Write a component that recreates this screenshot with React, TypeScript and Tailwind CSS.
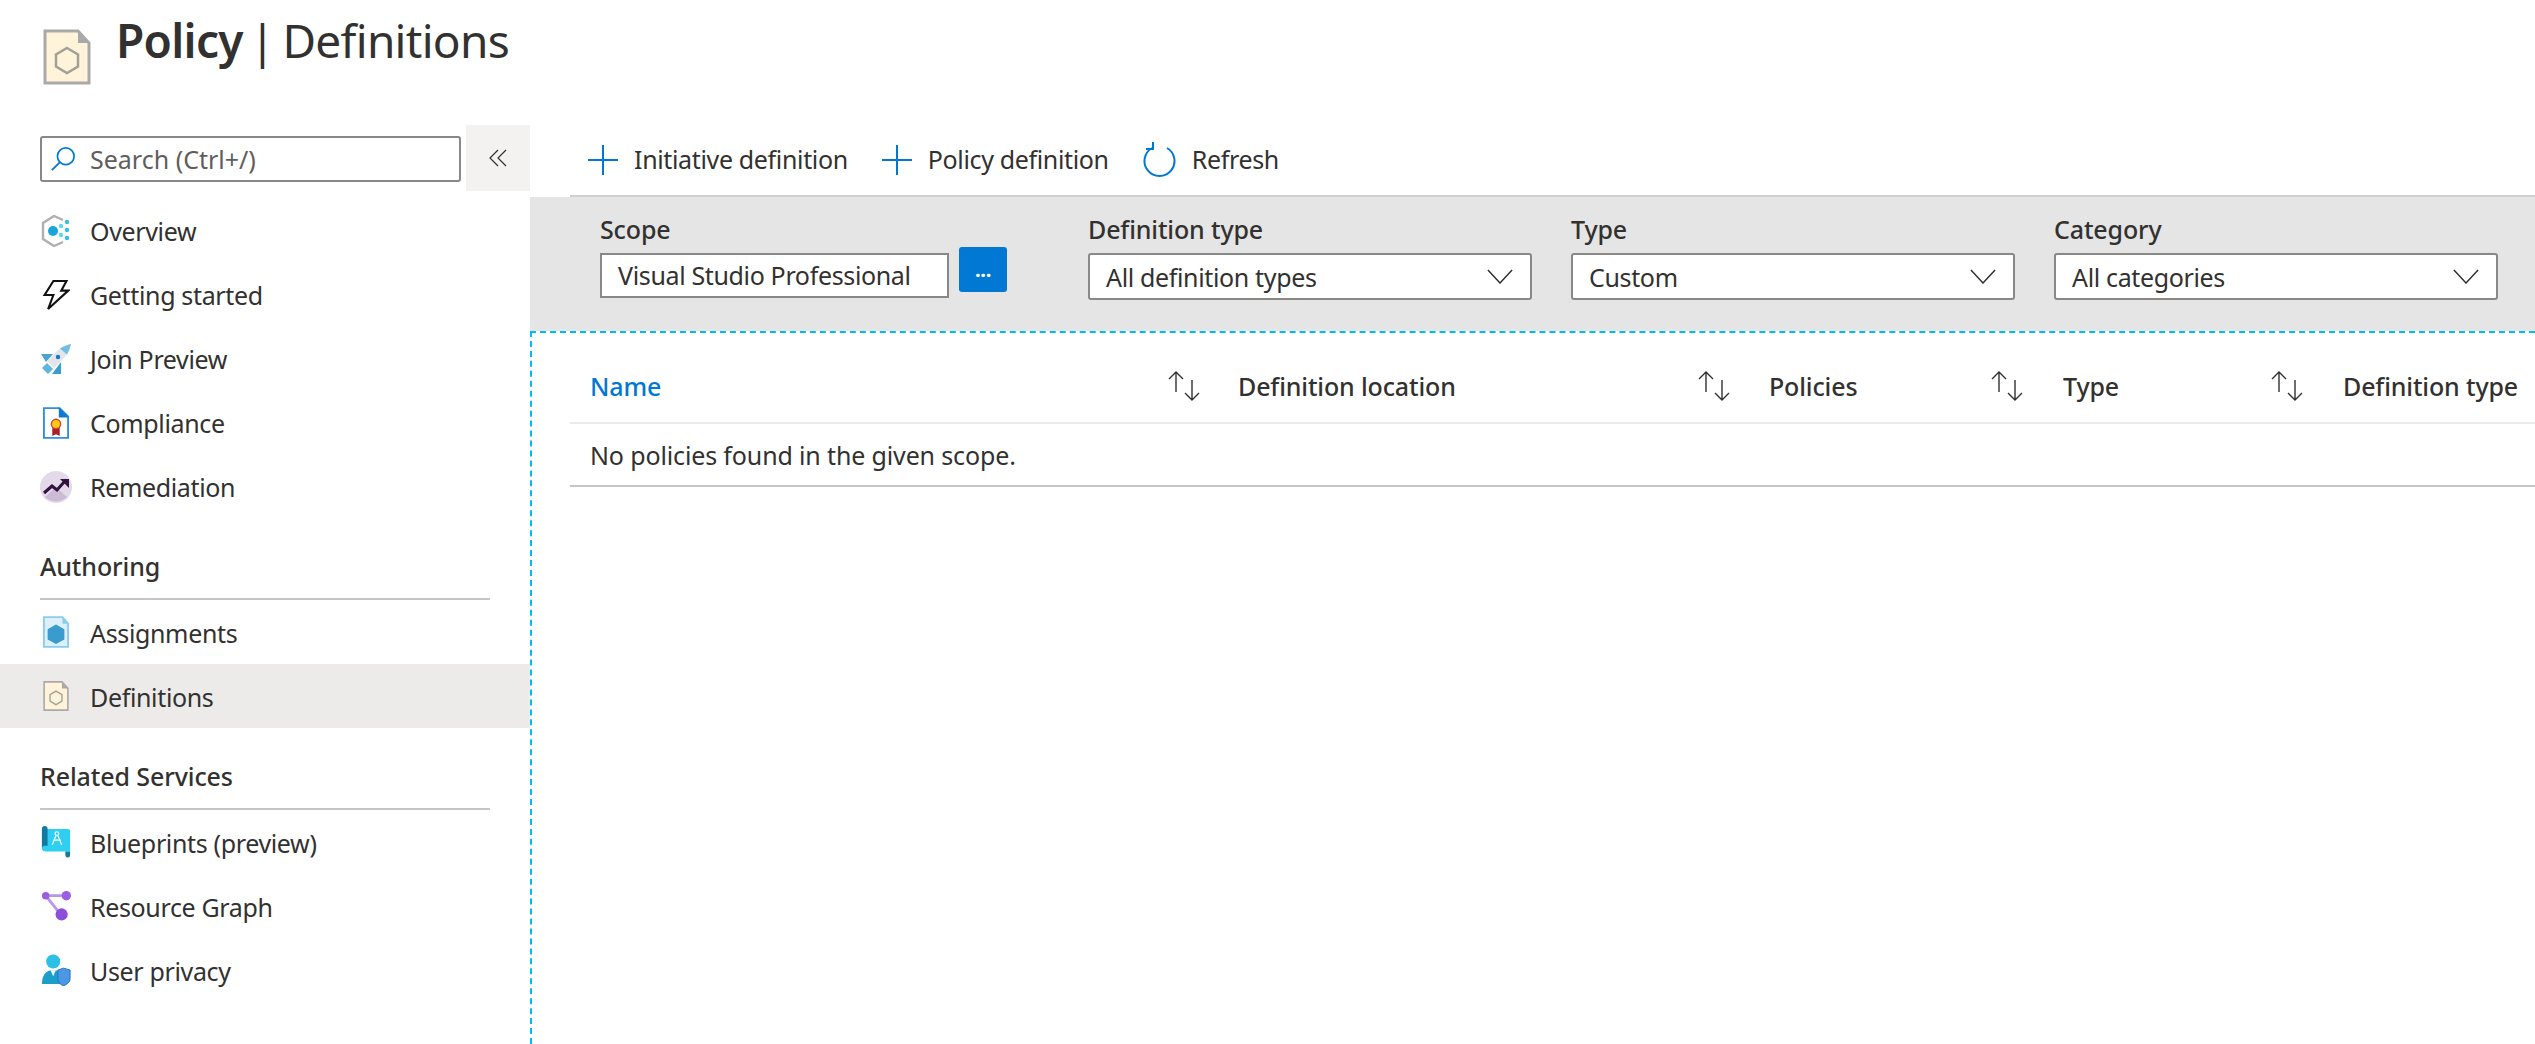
import React from 'react';

const PolicyDocIcon = ({ className }: { className: string }) => (
  <svg viewBox="0 0 48 56" className={className}>
    <path d="M2 2h33l11 12v40H2z" fill="#fff4d9" stroke="#a9a9a9" strokeWidth="3" />
    <path d="M35 2l11 12H35z" fill="#a9a9a9" />
    <path d="M24 19l11 6.5v12L24 44l-11-6.5v-12z" fill="none" stroke="#a3a09a" strokeWidth="2.5" />
  </svg>
);

const OverviewIcon = () => (
  <svg viewBox="0 0 32 32" className="w-[32px] h-[32px]">
    <path d="M23 5L14 1 3 8v16l11 7 9-4" fill="none" stroke="#b0b0b0" strokeWidth="2.4" />
    <circle cx="13" cy="16" r="5" fill="#1aa5d8" />
    <circle cx="21" cy="11" r="2.2" fill="#5fd9f2" />
    <circle cx="21" cy="20" r="2.2" fill="#5fd9f2" />
    <circle cx="27" cy="7" r="2.2" fill="#32bfe3" />
    <circle cx="27" cy="15" r="2.2" fill="#32bfe3" />
    <circle cx="27" cy="23" r="2.2" fill="#32bfe3" />
  </svg>
);

const BoltIcon = () => (
  <svg viewBox="0 0 32 36" className="w-[28px] h-[32px]">
    <path d="M13 2h15l-6 11h8L7 34l6-16H3z" fill="none" stroke="#111" strokeWidth="2.4" strokeLinejoin="miter" />
  </svg>
);

const RocketIcon = () => (
  <svg viewBox="0 0 32 32" className="w-[32px] h-[32px]">
    <path d="M1 11h12l-7 8z" fill="#4aa3d2" />
    <path d="M21 19v12h-9z" fill="#3b9ccf" />
    <path d="M7 18L17 8c4-4 9-6 14-7-1 5-3 10-7 14L14 25z" fill="#e3e6e8" />
    <path d="M20 5.500c3-2 7-3.500 11-4.500-1 4-2.500 8-4 10.500z" fill="#70bfe0" />
    <circle cx="18" cy="14" r="2.200" fill="#1a73c9" />
    <path d="M2 25l5-5 6 6-5 5z" fill="#5fb6dc" />
  </svg>
);

const ComplianceIcon = () => (
  <svg viewBox="0 0 28 34" className="w-[26px] h-[32px]">
    <path d="M1 1h17l9 9v23H1z" fill="#fff" stroke="#2f8ee0" strokeWidth="2" />
    <path d="M17 0l11 11H17z" fill="#0f78d4" />
    <path d="M10 21v10l4-2 4 2V21z" fill="#a61f2b" />
    <circle cx="14" cy="18" r="5" fill="#ffc815" stroke="#d9432a" strokeWidth="1.500" />
  </svg>
);

const RemediationIcon = () => (
  <svg viewBox="0 0 32 32" className="w-[32px] h-[32px]">
    <circle cx="16" cy="16" r="16" fill="#e3d9e9" />
    <path d="M5 26l11-10 11 10a16 16 0 0 1-22 0z" fill="#cdbbd6" />
    <path d="M4 22l8-7 5 4 8-9" fill="none" stroke="#32123f" strokeWidth="3" />
    <path d="M20 8h9v9z" fill="#32123f" />
  </svg>
);

const AssignmentIcon = () => (
  <svg viewBox="0 0 28 34" className="w-[26px] h-[32px]">
    <path d="M1 1h20l6 7v25H1z" fill="#dcf0f9" stroke="#8bcde9" strokeWidth="2" />
    <path d="M21 0l7 8h-7z" fill="#8bcde9" />
    <path d="M14 9l9 5v11l-9 5-9-5V14z" fill="#3a9bcf" />
  </svg>
);

const BlueprintIcon = () => (
  <svg viewBox="0 0 32 34" className="w-[30px] h-[32px]">
    <path d="M1 3h28a2 2 0 0 1 2 2v22H5a4 4 0 0 1-4-4z" fill="#2dd0f3" />
    <path d="M1 3a3 3 0 0 1 6 0v18H4a3 3 0 0 0-3 3z" fill="#13799f" />
    <path d="M26 27h5v4a2 2 0 0 1-5 0z" fill="#13799f" />
    <circle cx="17" cy="8" r="2" fill="none" stroke="#fff" strokeWidth="1.200" />
    <path d="M16 10l-4 10M18 10l4 10M13 15h8" fill="none" stroke="#fff" strokeWidth="1.200" />
  </svg>
);

const GraphIcon = () => (
  <svg viewBox="0 0 32 34" className="w-[30px] h-[32px]">
    <path d="M5 6h22M5 6l16 20" fill="none" stroke="#b796ee" strokeWidth="3" />
    <circle cx="5" cy="6" r="4" fill="#9a5fe3" />
    <circle cx="27" cy="6" r="5" fill="#9a5fe3" />
    <circle cx="22" cy="26" r="6.500" fill="#8c4fdc" />
  </svg>
);

const UserPrivacyIcon = () => (
  <svg viewBox="0 0 32 34" className="w-[30px] h-[32px]">
    <circle cx="13" cy="8" r="7.500" fill="#2bc0e4" />
    <path d="M1 32c0-9 4-15 12-15s12 6 12 15z" fill="#1a9fc9" />
    <path d="M10 17h6l-3 7z" fill="#e6f4f9" />
    <path d="M18 17l6-2 7 2v9c0 4-3 6-7 8-4-2-6-4-6-8z" fill="#4a97e6" stroke="#2272b9" strokeWidth="1" />
  </svg>
);

const PlusIcon = () => (
  <svg viewBox="0 0 32 32" className="w-[32px] h-[32px]">
    <path d="M16 1v30M1 16h30" stroke="#0078d4" strokeWidth="2" fill="none" />
  </svg>
);

const RefreshIcon = () => (
  <svg viewBox="0 0 34 36" className="w-[34px] h-[36px]">
    <path d="M24 6a15 15 0 1 1-15 0" fill="none" stroke="#0078d4" strokeWidth="2" />
    <path d="M10 0v7H3" fill="none" stroke="#0078d4" strokeWidth="2" />
  </svg>
);

const SortIcon = () => (
  <svg viewBox="0 0 34 30" className="w-[34px] h-[30px]">
    <path d="M9 1v20M2 8l7-7 7 7" fill="none" stroke="#323130" strokeWidth="1.400" />
    <path d="M25 9v20M18 22l7 7 7-7" fill="none" stroke="#323130" strokeWidth="1.400" />
  </svg>
);

const Chevron = () => (
  <svg viewBox="0 0 28 16" className="w-[26px] h-[15px]">
    <path d="M1 1l13 14L27 1" fill="none" stroke="#323130" strokeWidth="1.600" />
  </svg>
);

const NavItem = ({ icon, label, active, low }: { icon: React.ReactNode; label: string; active?: boolean; low?: boolean }) => (
  <div className={`h-[64px] flex items-center pl-[40px] ${active ? 'bg-[#edebe9]' : ''}`}>
    <span className="w-[50px] flex items-center"><span className="w-[32px] flex justify-center">{icon}</span></span>
    <span className={low ? 'pt-[4px]' : 'pt-[2px]'}>{label}</span>
  </div>
);

const SectionHead = ({ label, className }: { label: string; className: string }) => (
  <div className={`mx-[40px] border-b-2 border-[#c8c6c4] font-medium tracking-[-0.1px] flex items-center ${className}`}>{label}</div>
);

const FilterSelect = ({ label, value }: { label: string; value: string }) => (
  <div className="w-[444px]">
    <div className="font-medium tracking-[-0.14px] h-[34px] leading-[32px]">{label}</div>
    <div className="mt-[6px] h-[47px] bg-white border-2 border-[#8a8886] rounded-[3px] flex items-center justify-between pl-[16px] pr-[17px]">
      <span className="pt-[2px]">{value}</span>
      <Chevron />
    </div>
  </div>
);

const HeaderCell = ({ label, blue, pr }: { label: string; blue?: boolean; pr: string }) => (
  <div className={`flex items-center justify-between ${pr}`}>
    <span className={`font-medium tracking-[-0.14px] ${blue ? 'text-[#0078d4]' : ''}`}>{label}</span>
    <SortIcon />
  </div>
);

export default function App() {
  return (
    <div className="w-[2535px] h-[1044px] overflow-hidden bg-white text-[#323130] text-[25px] font-['Noto_Sans',sans-serif] tracking-[-0.35px]">
      <div className="h-[125px] flex items-start pl-[42px]">
        <PolicyDocIcon className="w-[50px] h-[56px] mt-[29px]" />
        <h1 className="ml-[24px] mt-[8px] text-[46px] leading-[64px] tracking-[-0.7px] flex">
          <span className="font-semibold">Policy</span>
          <span className="ml-[7px]">|</span>
          <span className="ml-[8px]">Definitions</span>
        </h1>
      </div>

      <div className="flex h-[919px]">
        <aside className="w-[530px] shrink-0">
          <div className="flex h-[66px]">
            <div className="w-[421px] h-[46px] ml-[40px] mt-[11px] border-2 border-[#8a8886] rounded-[3px] flex items-center pl-[8px] text-[#605e5c]">
              <svg viewBox="0 0 28 28" className="w-[26px] h-[26px]">
                <circle cx="17" cy="11" r="9" fill="none" stroke="#0078d4" strokeWidth="1.800" />
                <path d="M11 17L2 26" stroke="#0078d4" strokeWidth="2" />
              </svg>
              <span className="ml-[14px] pt-[2px] tracking-[0px]">Search (Ctrl+/)</span>
            </div>
            <div className="ml-[5px] w-[64px] bg-[#f3f2f1] flex items-center justify-center">
              <svg viewBox="0 0 18 18" className="w-[18px] h-[18px]">
                <path d="M9 1L1 9l8 8M17 1L9 9l8 8" fill="none" stroke="#323130" strokeWidth="1.200" />
              </svg>
            </div>
          </div>

          <nav className="mt-[8px]">
            <NavItem icon={<OverviewIcon />} label="Overview" />
            <NavItem icon={<BoltIcon />} label="Getting started" />
            <NavItem icon={<RocketIcon />} label="Join Preview" />
            <NavItem icon={<ComplianceIcon />} label="Compliance" />
            <NavItem icon={<RemediationIcon />} label="Remediation" />
            <SectionHead label="Authoring" className="h-[81px] pt-[17px]" />
            <NavItem icon={<AssignmentIcon />} label="Assignments" low />
            <NavItem icon={<PolicyDocIcon className="w-[26px] h-[32px]" />} label="Definitions" active low />
            <SectionHead label="Related Services" className="h-[82px] pt-[17px]" />
            <NavItem icon={<BlueprintIcon />} label="Blueprints (preview)" low />
            <NavItem icon={<GraphIcon />} label="Resource Graph" low />
            <NavItem icon={<UserPrivacyIcon />} label="User privacy" low />
          </nav>
        </aside>

        <main className="flex-1 min-w-0 flex flex-col">
          <div className="ml-[40px] h-[72px] border-b-2 border-[#d2d0ce] flex items-center pl-[17px]">
            <PlusIcon />
            <span className="ml-[15px]">Initiative definition</span>
            <span className="ml-[33px] flex items-center"><PlusIcon /></span>
            <span className="ml-[15px]">Policy definition</span>
            <span className="ml-[34px] flex items-center"><RefreshIcon /></span>
            <span className="ml-[15px]">Refresh</span>
          </div>

          <div className="h-[134px] bg-[#e5e5e5] flex pl-[70px] pt-[16px] gap-[39px]">
            <div className="w-[449px]">
              <div className="font-medium tracking-[-0.14px] h-[34px] leading-[32px]">Scope</div>
              <div className="flex items-start gap-[10px]">
                <div className="mt-[6px] w-[349px] h-[45px] bg-white border-2 border-[#8a8886] flex items-center pl-[16px]">
                  Visual Studio Professional
                </div>
                <div className="w-[48px] h-[45px] bg-[#0078d4] rounded-[3px] text-white flex items-center justify-center font-bold text-[20px]">
                  ...
                </div>
              </div>
            </div>
            <FilterSelect label="Definition type" value="All definition types" />
            <FilterSelect label="Type" value="Custom" />
            <FilterSelect label="Category" value="All categories" />
          </div>

          <div className="flex-1 border-l-2 border-t-2 border-dashed border-[#00bcf2] pl-[38px]">
            <div className="h-[91px] border-b-2 border-[#edebe9] grid grid-cols-[648px_531px_294px_280px_auto] pl-[20px] items-end pb-[17px]">
              <HeaderCell label="Name" blue pr="pr-[37px]" />
              <HeaderCell label="Definition location" pr="pr-[38px]" />
              <HeaderCell label="Policies" pr="pr-[39px]" />
              <HeaderCell label="Type" pr="pr-[39px]" />
              <div className="font-medium tracking-[-0.14px] whitespace-nowrap">Definition type</div>
            </div>
            <div className="h-[63px] border-b-2 border-[#c8c6c4] flex items-center pl-[20px] pt-[2px] tracking-[-0.14px]">
              No policies found in the given scope.
            </div>
          </div>
        </main>
      </div>
    </div>
  );
}
